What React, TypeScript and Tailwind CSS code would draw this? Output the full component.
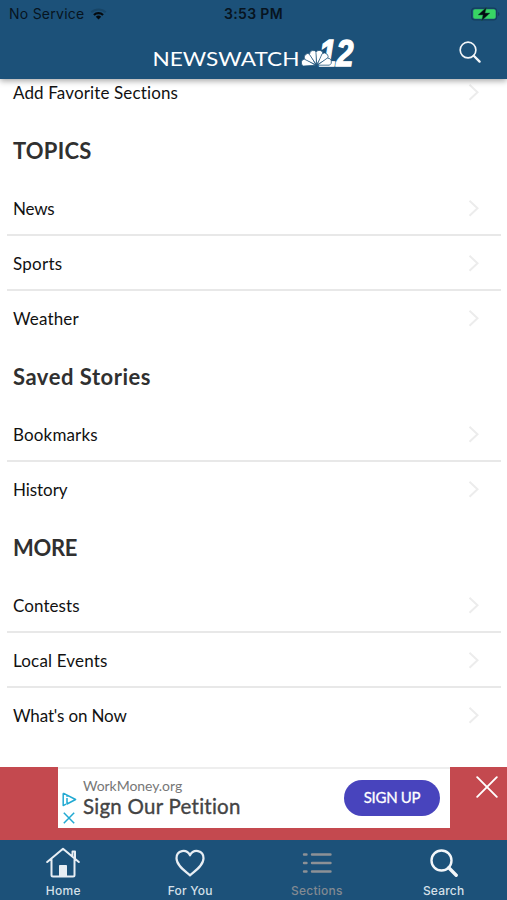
import React from "react";

type Row = { label: string; tracking: string; divider?: boolean };
type Section = { title: string; tracking: string; rows: Row[] };

const sections: Section[] = [
  {
    title: "TOPICS",
    tracking: "tracking-[0.2px]",
    rows: [
      { label: "News", tracking: "tracking-[-0.2px]", divider: true },
      { label: "Sports", tracking: "tracking-[0.25px]", divider: true },
      { label: "Weather", tracking: "tracking-[0.15px]" },
    ],
  },
  {
    title: "Saved Stories",
    tracking: "tracking-[0.52px]",
    rows: [
      { label: "Bookmarks", tracking: "tracking-[0.15px]", divider: true },
      { label: "History", tracking: "tracking-[-0.07px]" },
    ],
  },
  {
    title: "MORE",
    tracking: "tracking-[-0.3px]",
    rows: [
      { label: "Contests", tracking: "tracking-[0.07px]", divider: true },
      { label: "Local Events", tracking: "tracking-[0.17px]", divider: true },
      { label: "What's on Now", tracking: "tracking-[-0.15px]" },
    ],
  },
];

function Chevron() {
  return (
    <svg className="h-[18px] w-3 shrink-0" viewBox="0 0 12 18" fill="none" stroke="#ececec" strokeWidth="2">
      <path d="M1.500 1.800 9.500 9.300l-8 7.500" />
    </svg>
  );
}

function ListRow({ label, tracking, divider }: Row) {
  return (
    <div
      className={`mr-[6px] ml-[7px] flex h-[55px] shrink-0 items-center justify-between border-b-2 pt-px pr-[21px] pl-[6px] ${
        divider ? "border-[#e8e8e8]" : "border-transparent"
      }`}
    >
      <span className={`pt-px text-[17px] leading-6 whitespace-nowrap text-[#111] ${tracking}`}>{label}</span>
      <Chevron />
    </div>
  );
}

function StatusBar() {
  return (
    <div className="grid h-7 grid-cols-3 items-center px-[9px] font-['Inter',sans-serif] text-[14px] leading-none text-[#071420]">
      <div className="flex items-center gap-[6px]">
        <span className="tracking-[0.25px] whitespace-nowrap">No Service</span>
        <svg className="h-3 w-[17px]" viewBox="0 0 17 12">
          <path d="M.6 3.600a11.500 11.500 0 0 1 15.800 0l-1.400 1.500a9.400 9.400 0 0 0-13 0z" fill="#174567" />
          <path d="M3.200 6.200a7.800 7.800 0 0 1 10.600 0l-1.500 1.600a5.600 5.600 0 0 0-7.600 0z" fill="#050a0e" />
          <path d="M5.800 8.800a4 4 0 0 1 5.400 0L8.500 11.600z" fill="#050a0e" />
        </svg>
      </div>
      <span className="text-center font-semibold tracking-[0.35px] whitespace-nowrap">3:53 PM</span>
      <svg className="mr-[-2px] h-[14px] w-[29px] justify-self-end" viewBox="0 0 29 14">
        <rect x=".6" y="1.100" width="25" height="11.800" rx="3.200" fill="none" stroke="#153e5d" strokeWidth="1.200" />
        <path d="M27 5v4q1.500-.6 1.500-2T27 5z" fill="#153e5d" />
        <rect x="2.200" y="2.200" width="22.500" height="9.600" rx="1.800" fill="#38d564" />
        <path d="M15.500.3 7 7.900h5L10.600 13.700 19 6.100h-5z" fill="#040b10" stroke="#1b6548" strokeWidth=".5" />
      </svg>
    </div>
  );
}

const petalAngles = [-76, -46, -16, 14, 42, 72];

function Logo() {
  return (
    <svg className="h-[34px] w-[204px] overflow-visible" viewBox="152 35 204 34" fill="#fff" role="img">
      <text x="152.500" y="65.700" fontFamily="Lato, sans-serif" fontSize="19.500" textLength="147" lengthAdjust="spacingAndGlyphs">
        NEWSWATCH
      </text>
      <text
        x="319"
        y="65.500"
        fontFamily="Liberation Sans, Arial, sans-serif"
        fontWeight="bold"
        fontStyle="italic"
        fontSize="37.500"
        stroke="#fff"
        strokeWidth="1.300"
        textLength="34.500"
        lengthAdjust="spacingAndGlyphs"
      >
        12
      </text>
      <g stroke="#1c5179" strokeWidth=".7">
        {petalAngles.map((angle) => (
          <path key={angle} d="M0-1-3.700-12.500a3.800 3.900 0 0 1 7.400 0z" transform={`translate(316.500 65.500) rotate(${angle})`} />
        ))}
      </g>
    </svg>
  );
}

function Magnifier({ className, weight }: { className: string; weight: number }) {
  return (
    <svg className={className} viewBox="0 0 28 28" fill="none" stroke="#f3f6f9" strokeWidth={weight} strokeLinecap="round">
      <circle cx="11.500" cy="11.500" r="10" />
      <path d="m18.800 18.800 7.400 7.400" strokeWidth={weight * 1.4} />
    </svg>
  );
}

function Header() {
  return (
    <header className="relative z-10 h-[79px] shrink-0 bg-[#1c5179] shadow-[0_2px_6px_rgba(0,0,0,0.35)]">
      <StatusBar />
      <div className="grid grid-cols-[1fr_auto_1fr] items-start pt-[7px] pr-[26px] pl-[27px]">
        <span />
        <Logo />
        <Magnifier className="mt-[6px] h-[22px] w-[22px] justify-self-end" weight={2.1} />
      </div>
    </header>
  );
}

function AdBanner() {
  return (
    <div className="flex h-[73px] shrink-0 justify-between bg-[#c4494f] pl-[58px]">
      <div className="flex h-[61px] w-[392px] border-t-2 border-[#eee] bg-white">
        <div className="flex w-[25px] flex-col items-center gap-[5px] pt-[23px] pr-[3px]">
          <svg className="h-[15px] w-[15px] shrink-0" viewBox="0 0 15 15" fill="none" stroke="#21a9d2" strokeWidth="1.500">
            <path d="M1.200 1.200v12.400L4 12.200M1.200 1.200 13.600 7.500 5 12V6M5 3.800v1" strokeLinejoin="round" />
          </svg>
          <svg className="h-[12px] w-[12px] shrink-0" viewBox="0 0 12 12" fill="none" stroke="#21a9d2" strokeWidth="1.500">
            <path d="m.8.8 10.400 10.400M11.200.8.8 11.200" />
          </svg>
        </div>
        <div className="flex flex-1 flex-col pt-[8px]">
          <span className="text-[14px] leading-[17px] whitespace-nowrap text-[#777] tracking-[-0.05px]">WorkMoney.org</span>
          <span className="text-[20.500px] leading-[25px] whitespace-nowrap text-[#444] [-webkit-text-stroke:0.35px_#444] tracking-[0.25px]">
            Sign Our Petition
          </span>
        </div>
        <div className="mt-[11px] mr-[10px] flex h-9 w-24 items-center justify-center rounded-full bg-[#4844bd] pb-px text-[15px] whitespace-nowrap text-white [-webkit-text-stroke:0.3px_white] tracking-[-0.3px]">
          SIGN UP
        </div>
      </div>
      <svg className="mt-[9px] mr-[9px] h-[22px] w-[22px]" viewBox="0 0 22 22" stroke="#fff" strokeWidth="1.900" strokeLinecap="round">
        <path d="m1.200 1.200 19.600 19.600M20.800 1.200 1.200 20.800" />
      </svg>
    </div>
  );
}

function HomeIcon() {
  return (
    <svg className="h-[32px] w-[34px]" viewBox="0 0 34 32" fill="none" stroke="#e8eef4" strokeWidth="2" strokeLinecap="round" strokeLinejoin="round">
      <path d="M1.200 15 17 1.700 32.800 15M5.500 12.500v15.500q0 1.500 1.500 1.500h20q1.500 0 1.500-1.500V12.500M26.500 9.500V4.500h2.500v7.500" />
      <path d="M13.500 29V18.500h7v10.500z" fill="#e8eef4" strokeWidth="1" />
    </svg>
  );
}

function HeartIcon() {
  return (
    <svg className="h-[28px] w-[30px]" viewBox="0 0 30 28" fill="none" stroke="#e8eef4" strokeWidth="2.200" strokeLinejoin="round">
      <path d="M15 26.300C10 22 1.500 16.500 1.500 9.300 1.500 1 11.500-.5 15 6.300 18.500-.5 28.500 1 28.500 9.300 28.500 16.500 20 22 15 26.300z" />
    </svg>
  );
}

function SectionsIcon() {
  return (
    <svg className="h-[24px] w-[30px]" viewBox="0 0 30 24" stroke="#8d9196" strokeWidth="2.400" strokeLinecap="round">
      <path d="M2 3.500h2.500M10 3.500h18.500M2 12h2.500M10 12h18.500M2 20.500h2.500M10 20.500h18.500" />
    </svg>
  );
}

const tabs = [
  { label: "Home", icon: <HomeIcon />, color: "text-[#d5e0e9]", tracking: "tracking-[0.3px]" },
  { label: "For You", icon: <HeartIcon />, color: "text-[#d5e0e9]", tracking: "tracking-[0.2px]" },
  { label: "Sections", icon: <SectionsIcon />, color: "text-[#828a92]", tracking: "tracking-[0.25px]" },
  { label: "Search", icon: <Magnifier className="h-[28px] w-[28px]" weight={2.4} />, color: "text-[#d5e0e9]", tracking: "tracking-[0.2px]" },
];

export default function App() {
  return (
    <div className="flex h-[900px] w-[507px] flex-col overflow-hidden bg-white font-['Lato',sans-serif] [font-variant-ligatures:none]">
      <Header />
      <main className="flex h-[688px] flex-col">
        <div className="flex h-[41px] shrink-0 flex-col justify-end overflow-hidden">
          <ListRow label="Add Favorite Sections" tracking="tracking-[0.14px]" />
        </div>
        {sections.map((section) => (
          <section key={section.title}>
            <h2 className={`flex h-[61px] items-center pl-[13px] text-[22px] leading-none font-bold whitespace-nowrap text-[#303030] ${section.tracking}`}>
              {section.title}
            </h2>
            {section.rows.map((row) => (
              <ListRow key={row.label} {...row} />
            ))}
          </section>
        ))}
      </main>
      <AdBanner />
      <nav className="grid h-[60px] shrink-0 grid-cols-4 bg-[#1c5179]">
        {tabs.map((tab) => (
          <div key={tab.label} className="flex flex-col items-center">
            <div className="flex h-[46px] items-center">{tab.icon}</div>
            <span className={`-mt-[3px] font-['Inter',sans-serif] text-[12px] leading-4 font-medium ${tab.color} ${tab.tracking}`}>{tab.label}</span>
          </div>
        ))}
      </nav>
    </div>
  );
}
